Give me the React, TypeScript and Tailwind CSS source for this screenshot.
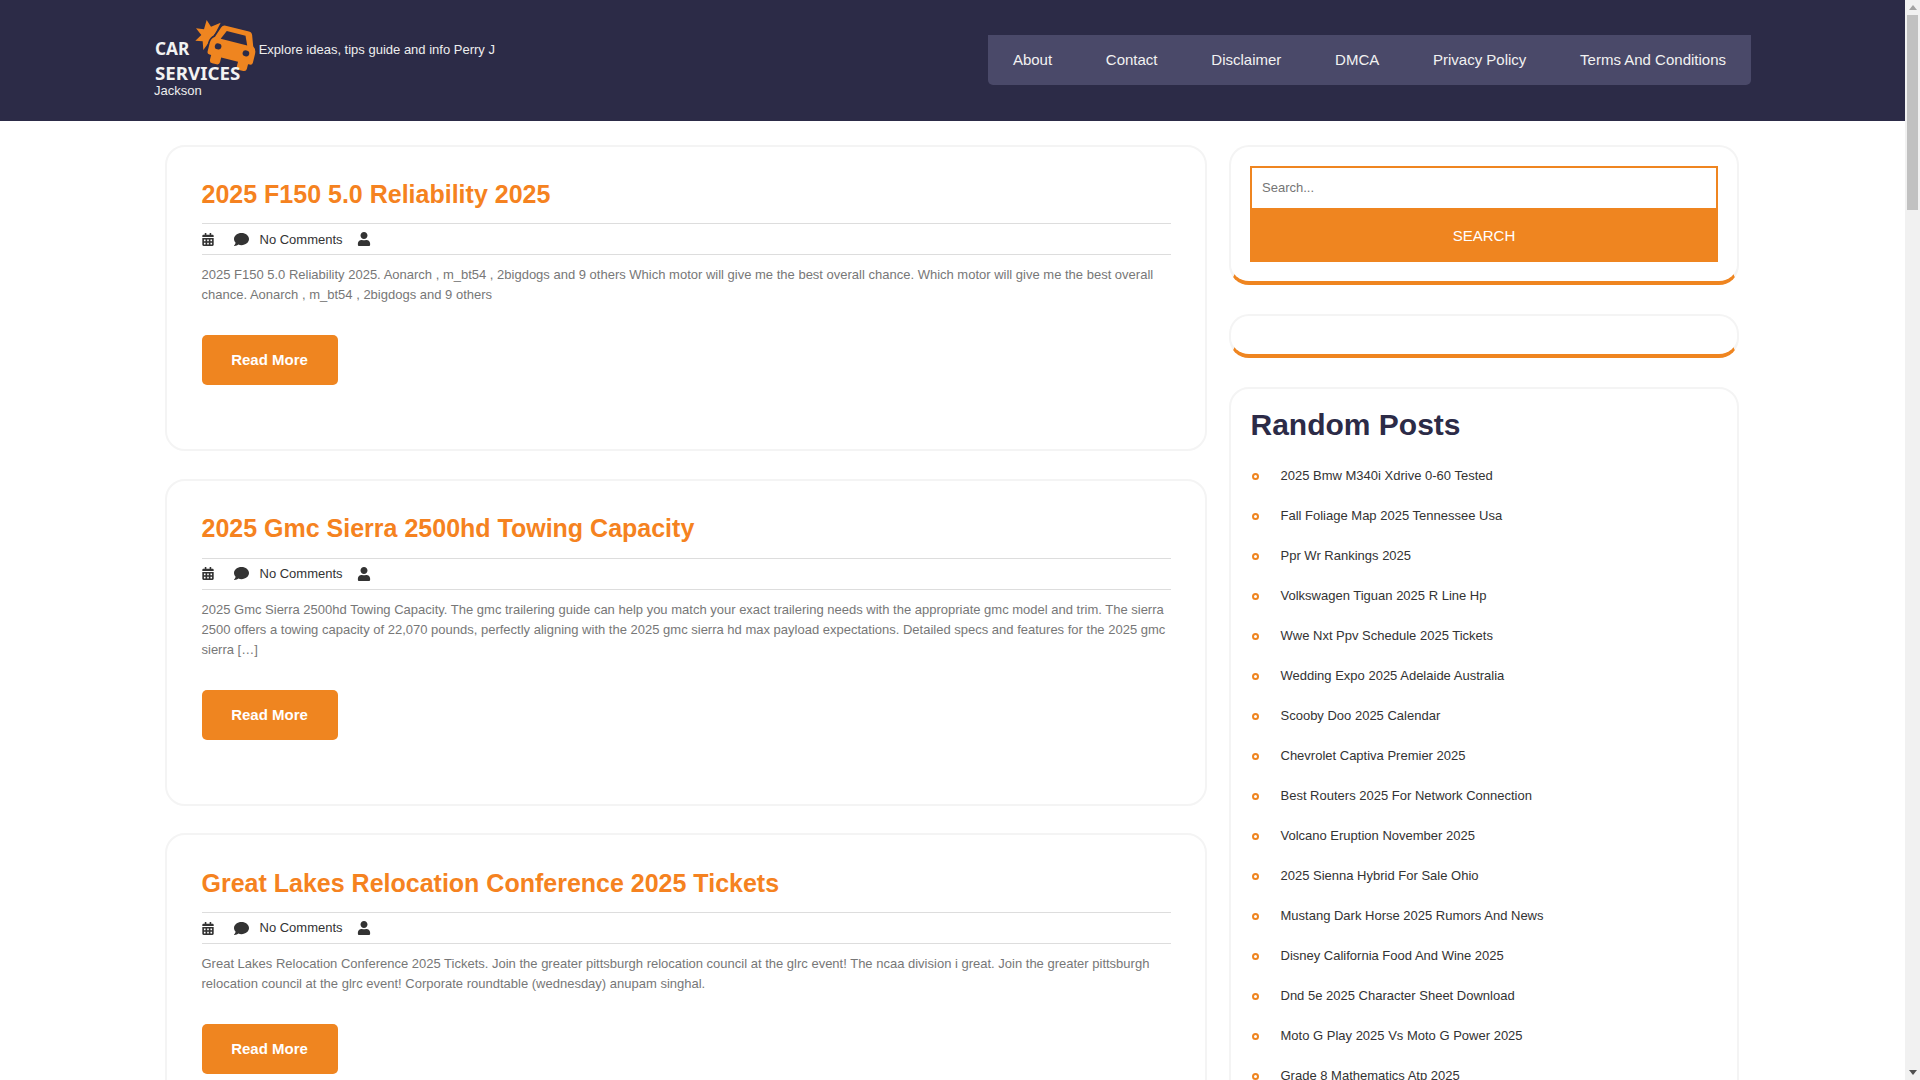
import { FaCalendarAlt, FaComment, FaUser } from "react-icons/fa";

const NAV = ["About", "Contact", "Disclaimer", "DMCA", "Privacy Policy", "Terms And Conditions"];

const POSTS = [
  {
    title: "2025 F150 5.0 Reliability 2025",
    body: "2025 F150 5.0 Reliability 2025. Aonarch , m_bt54 , 2bigdogs and 9 others Which motor will give me the best overall chance. Which motor will give me the best overall chance. Aonarch , m_bt54 , 2bigdogs and 9 others",
  },
  {
    title: "2025 Gmc Sierra 2500hd Towing Capacity",
    body: "2025 Gmc Sierra 2500hd Towing Capacity. The gmc trailering guide can help you match your exact trailering needs with the appropriate gmc model and trim. The sierra 2500 offers a towing capacity of 22,070 pounds, perfectly aligning with the 2025 gmc sierra hd max payload expectations. Detailed specs and features for the 2025 gmc sierra […]",
  },
  {
    title: "Great Lakes Relocation Conference 2025 Tickets",
    body: "Great Lakes Relocation Conference 2025 Tickets. Join the greater pittsburgh relocation council at the glrc event! The ncaa division i great. Join the greater pittsburgh relocation council at the glrc event! Corporate roundtable (wednesday) anupam singhal.",
  },
];

const RANDOM = [
  "2025 Bmw M340i Xdrive 0-60 Tested",
  "Fall Foliage Map 2025 Tennessee Usa",
  "Ppr Wr Rankings 2025",
  "Volkswagen Tiguan 2025 R Line Hp",
  "Wwe Nxt Ppv Schedule 2025 Tickets",
  "Wedding Expo 2025 Adelaide Australia",
  "Scooby Doo 2025 Calendar",
  "Chevrolet Captiva Premier 2025",
  "Best Routers 2025 For Network Connection",
  "Volcano Eruption November 2025",
  "2025 Sienna Hybrid For Sale Ohio",
  "Mustang Dark Horse 2025 Rumors And News",
  "Disney California Food And Wine 2025",
  "Dnd 5e 2025 Character Sheet Download",
  "Moto G Play 2025 Vs Moto G Power 2025",
  "Grade 8 Mathematics Atp 2025",
];

function Logo() {
  return (
    <svg viewBox="72 57 306 192" className="inline-block w-[102px] h-[64px] align-middle">
      <polygon
        fill="#ef8520"
        points="230,60 243,80 272,68 258,96 238,125 220,150 218,124 196,122 214,105 198,85 222,88"
      />
      <g transform="rotate(14 308 142)">
        <path
          fill="#ef8520"
          stroke="#2c2b47"
          strokeWidth="10"
          paintOrder="stroke"
          d="M272,84 H344 Q353,84 356,93 L367,124 Q378,131 378,146 V172 Q378,180 370,180 H365 V194 Q365,203 356,203 H343 Q334,203 334,194 V180 H282 V194 Q282,203 273,203 H260 Q251,203 251,194 V180 H246 Q238,180 238,172 V146 Q238,131 249,124 L260,93 Q263,84 272,84 Z"
        />
        <path fill="#2c2b47" d="M279,99 H337 L349,126 H267 Z" />
        <ellipse cx="265" cy="150" rx="10" ry="9" fill="#2c2b47" />
        <ellipse cx="351" cy="150" rx="10" ry="9" fill="#2c2b47" />
      </g>
      <text
        x="75"
        y="165"
        fill="#f2f2f2"
        fontFamily="'Noto Sans', sans-serif"
        fontWeight="700"
        fontSize="54"
        textLength="103"
        lengthAdjust="spacingAndGlyphs"
      >
        CAR
      </text>
      <text
        x="75"
        y="241"
        fill="#f2f2f2"
        fontFamily="'Noto Sans', sans-serif"
        fontWeight="700"
        fontSize="54"
        textLength="256"
        lengthAdjust="spacingAndGlyphs"
      >
        SERVICES
      </text>
    </svg>
  );
}

function PostCard({ title, body }: { title: string; body: string }) {
  return (
    <article className="border-2 border-[#f4f4f4] rounded-[20px] pl-[34.5px] pr-[34px] pt-[29.2px] pb-[64px] mb-[27.6px] bg-white">
      <h2 className="text-[25px] leading-[36px] font-bold text-[#f58220] mb-[11.5px]">{title}</h2>
      <div className="flex items-center h-[32px] border-y border-[#dddddd] text-[13px] text-[#333333]">
        <FaCalendarAlt className="w-[12px] h-[13px] text-[#333333]" />
        <FaComment className="ml-[20px] w-[15px] h-[15px] text-[#333333]" />
        <span className="ml-[11px]">No Comments</span>
        <FaUser className="ml-[14.5px] w-[14px] h-[14px] text-[#333333]" />
      </div>
      <p className="mt-[10px] text-[13px] leading-[20.2px] text-[#777777]">{body}</p>
      <a className="mt-[29.6px] flex items-center justify-center w-[136px] h-[50px] rounded-[5px] bg-[#ef8520] text-white text-[15px] font-bold">
        Read More
      </a>
    </article>
  );
}

function Scrollbar() {
  return (
    <div className="w-[15px] h-screen shrink-0 bg-[#f1f1f1] flex flex-col items-center">
      <div className="h-[15px] flex items-center justify-center">
        <div className="w-0 h-0 border-x-[4px] border-x-transparent border-b-[5px] border-b-[#a3a3a3]" />
      </div>
      <div className="w-[11px] h-[195px] bg-[#c1c1c1]" />
      <div className="flex-1" />
      <div className="h-[15px] flex items-center justify-center">
        <div className="w-0 h-0 border-x-[4px] border-x-transparent border-t-[5px] border-t-[#505050]" />
      </div>
    </div>
  );
}

export default function App() {
  return (
    <div className="flex h-screen overflow-hidden bg-white font-['Liberation_Sans',Arial,sans-serif] text-[13px] text-[#333333]">
      <div className="w-[1905px] shrink-0 overflow-hidden">
        <header className="bg-[#2c2b47] h-[121px] pl-[154px] pr-[154px] flex items-start justify-between">
          <div className="w-[345px] pt-[19px] text-[13px] leading-[16px] text-[#eeeeee]">
            <Logo /> <span className="ml-[-1px]">Explore ideas, tips guide and info Perry J Jackson</span>
          </div>
          <nav className="mt-[35px] h-[50px] flex items-center gap-[3.75px] bg-[#4a4969] rounded-b-[5px]">
            {NAV.map((n) => (
              <a key={n} className="px-[25px] text-[15px] text-[#f2f2f2] whitespace-nowrap">
                {n}
              </a>
            ))}
          </nav>
        </header>

        <div className="ml-[165px] mt-[23.6px] flex items-start gap-[22px]">
          <main className="w-[1042px] shrink-0">
            {POSTS.map((p) => (
              <PostCard key={p.title} {...p} />
            ))}
          </main>

          <aside className="w-[510px] shrink-0 mt-[0.4px]">
            <div className="border-2 border-[#f4f4f4] border-b-4 border-b-[#ef8520] rounded-[20px] px-[19px] pt-[19px] pb-[19px] mb-[29px] bg-white">
              <input
                placeholder="Search..."
                className="block w-full h-[42px] border-2 border-b-0 border-[#ef8520] bg-white px-[10px] pb-[1px] text-[13px] placeholder:text-[#757575] outline-none"
              />
              <button className="block w-full h-[54px] pt-[2px] bg-[#ef8520] text-white text-[15px]">SEARCH</button>
            </div>

            <div className="h-[44px] border-2 border-[#f4f4f4] border-b-4 border-b-[#ef8520] rounded-[20px] mb-[29px] bg-white" />

            <div className="border-2 border-[#f4f4f4] rounded-[20px] pl-[19.5px] pr-[19px] pt-[16px] pb-[20px] bg-white">
              <h3 className="text-[30px] leading-[40px] font-bold text-[#2c2b47] mb-[11px]">Random Posts</h3>
              <ul>
                {RANDOM.map((r) => (
                  <li key={r} className="flex items-center h-[40px] text-[13px] text-[#333333]">
                    <span className="ml-[1px] mr-[22px] mt-[2px] w-[7px] h-[7px] rounded-full border-2 border-[#ef8520] shrink-0" />
                    <span>{r}</span>
                  </li>
                ))}
              </ul>
            </div>
          </aside>
        </div>
      </div>
      <Scrollbar />
    </div>
  );
}
